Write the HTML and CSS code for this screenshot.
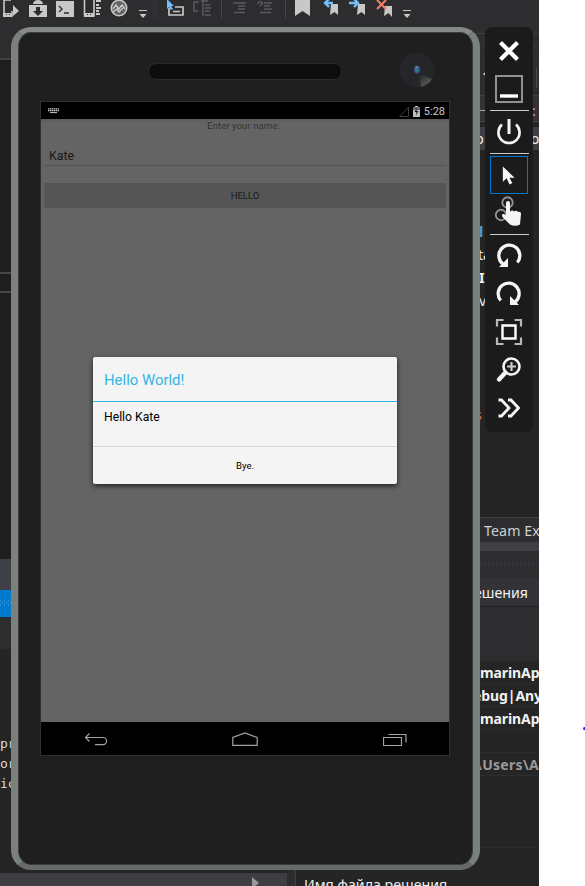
FILE: index.html
```html
<!DOCTYPE html>
<html lang="ru">
<head>
<meta charset="utf-8">
<title>Android Emulator</title>
<link rel="stylesheet" href="styles.css">
</head>
<body>
<div class="desktop">
  <div class="ide">
    <div class="toolbar">
      <svg width="539" height="27" viewBox="0 0 539 27">
        <g fill="none" stroke="#c8c8c8" stroke-width="1.6">
          <path d="M11 0H4V16H12V11"/><path d="M84.500 0V16H94V0"/>
        </g>
        <g fill="#c8c8c8">
          <path d="M13 5l6 6-6 5zM3 13h9v4H3zM84 13h10v4H84z"/>
          <path d="M96 0h5v2h-5zM96 4h3v2h-3zM96 7h5v2h-5zM96 10h3v2h-3zM96 13h4v2h-4z"/>
          <path d="M29 5h18v12H29zM33 4a5 4 0 0 1 10 0z"/>
          <path d="M56 1h18v16H56z"/>
          <path d="M295 0h15v16l-7.500-5-7.500 5z"/>
          <path d="M331 4h7v11l-3.500-3-4.500 3zM358 4h7v11l-3.500-3-4.500 3zM385 6h7v11l-3.500-4-4.500 3z"/>
          <path d="M139 10h8v1h-8zM139.500 14h7l-3.500 4zM403 10h8v1h-8zM403.500 14h7l-3.500 4z"/>
        </g>
        <path d="M36 7h4v4h3l-5 5-5-5h3z" fill="#2d2d30"/>
        <path d="M59 6l3 3-3 3M64 13h5" fill="none" stroke="#2d2d30" stroke-width="1.300"/>
        <path d="M6 14.500h1M9 14.500h1M87 14.500h1M90 14.500h1" stroke="#2d2d30"/>
        <circle cx="119" cy="8" r="7.700" fill="#646466" stroke="#c8c8c8" stroke-width="1.600"/>
        <path d="M113 9l3-4 3 4 3-4 3 4M113 12l4-3 2 3 4-4" fill="none" stroke="#c8c8c8" stroke-width="1.400"/>
        <path d="M153 1v18M157 1v18" stroke="#46464a" stroke-width="1" stroke-dasharray="1 3"/><path d="M155 3v16" stroke="#46464a" stroke-dasharray="1 3"/>
        <path d="M169 8v7h14V7h-8M173 11.500h7" fill="none" stroke="#c8c8c8" stroke-width="1.700"/>
        <path d="M167 0v9l2-2 2 3 2-1-2-3h3l-6-6z" fill="#75bfff"/>
        <g fill="none" stroke="#5b5b5e" stroke-width="1.500">
          <path d="M199 2h-5v9h4M203 0v16M201 1h7M205 5h5M205 8h6M205 11h5M205 15h6"/>
          <path d="M233 3h13M238 6h7M238 9h7M234 12.500h11M258 4q0-3 3-2t-1 4M264 3h8M264 6h6M264 9h8M260 12.500h11"/>
        </g>
        <path d="M221.500 0v18M285.500 0v18" stroke="#46464a"/>
        <path d="M333 3h-8M329-1l-4 4 4 4M349 3h9M354-1l4 4-4 4" fill="none" stroke="#75bfff" stroke-width="2.400"/>
        <path d="M377 0l9 9M386 0l-9 9" stroke="#f6806c" stroke-width="2"/>
      </svg>
    </div>
    <div class="work">
      <div class="editor">
        <div class="editor-tabs"></div>
        <div class="code-pane"><div class="splitter-line"></div><div class="splitter-line second"></div></div>
        <div class="pane-gap"></div>
        <div class="pane-title"><svg width="12" height="8"><path d="M0 1h12M0 5h12" stroke="#59a8de" stroke-dasharray="1 3"/><path d="M2 3h10" stroke="#59a8de" stroke-dasharray="1 3"/></svg></div>
        <div class="pane-tools"></div>
        <div class="output"><div>pr</div><div>or</div><div>ic</div></div>
        <div class="scrollbar"><svg width="9" height="12" viewBox="0 0 9 12"><path d="M0 0l7 6-7 6z" fill="#999"/></svg></div>
      </div>
      <div class="explorer">
        <div class="exp-top"></div>
        <div class="exp-dots"><svg width="60" height="12"><path d="M1 1h58M1 5h58" stroke="#46464a" stroke-dasharray="1 3"/><path d="M3 3h56" stroke="#46464a" stroke-dasharray="1 3"/></svg></div>
        <div class="exp-tools"><svg width="60" height="34"><path d="M6 1.500v5l-3-2.500z" transform="translate(0 2)" fill="#ccc"/><path d="M56.500 -4v24" stroke="#4a4a4f"/></svg></div>
        <div class="exp-search"><span>:</span></div>
        <div class="exp-gap"></div>
        <div class="exp-selected"><span>p</span><span>o</span></div>
        <div class="tree">
          <div class="blue">l</div><div class="ta">ta</div><div class="strong">Ir</div><div>v</div><div class="orange">s</div>
        </div>
        <div class="team">Team Ex</div>
        <div class="exp-divider"></div>
        <div class="prop-dots"><svg width="60" height="8"><path d="M0 1h60M0 5h60" stroke="#46464a" stroke-dasharray="1 3"/><path d="M2 3h58" stroke="#46464a" stroke-dasharray="1 3"/></svg></div>
        <div class="prop-title">ешения</div>
        <div class="prop-tools"></div>
        <div class="props">
          <div class="prop">marinAp</div><div class="prop"><span class="bug">e</span>bug|Any</div><div class="prop">marinAp</div><div class="prop"></div><div class="prop dim"><span class="slash">\</span>Users\A</div><div class="prop tall"></div>
        </div>
        <div class="prop-help"><div class="help-name">(Имя)</div><div>Имя файла решения</div></div>
      </div>
    </div>
  </div>
  <div class="page-edge"><span class="mark"></span></div>

  <div class="phone">
    <div class="phone-top">
      <div class="speaker"></div>
      <svg class="camera" width="36" height="36" viewBox="0 0 36 36"><defs><linearGradient id="glare" x1="0" y1="0" x2="1" y2="1"><stop offset="0" stop-color="#252628"/><stop offset="1" stop-color="#69696a"/></linearGradient></defs><circle cx="18" cy="18" r="17.500" fill="#25262a"/><path d="M20 23l2 12a17.500 17.500 0 0 0 11-8L24 23z" fill="url(#glare)"/><ellipse cx="18" cy="17.500" rx="3" ry="4" fill="#40558a"/><circle cx="18" cy="18.500" r="1.800" fill="#267c87"/><circle cx="17.500" cy="15.500" r="1" fill="#858bb5"/></svg>
    </div>
    <div class="screen">
      <div class="status">
        <svg width="11" height="6" viewBox="0 0 11 6"><path d="M0 .8h11M0 2.700h11" stroke="#c8c8c8" stroke-width="1.300" stroke-dasharray="1.500 .5"/><path d="M2 4.600h7" stroke="#c8c8c8"/></svg>
        <div class="status-right">
          <svg width="10" height="11" viewBox="0 0 10 11"><path d="M.5 10.500h9V1z" fill="none" stroke="#3d3d3d"/></svg>
          <svg width="7" height="11" viewBox="0 0 7 11"><path d="M2 0h3v1h2v10H0V1h2z" fill="#bdbdbd"/><path d="M0 1h7v3H0z" fill="#666"/><path d="M4 2L1.500 6h2L3 9.500 5.500 5h-2z" fill="#111"/></svg>
          <span>5:28</span>
        </div>
      </div>
      <div class="app">
        <div class="label">Enter your name:</div>
        <div class="field">Kate</div>
        <div class="hello">HELLO</div>
        <div class="dialog">
          <div class="dialog-title">Hello World!</div>
          <div class="dialog-body">Hello Kate</div>
          <div class="dialog-button">Bye.</div>
        </div>
      </div>
      <div class="nav">
        <svg width="24" height="16" viewBox="0 0 24 16"><path d="M5.500 1.500L1.500 5.500l4 4M1.500 5.500H19a3.600 3.600 0 0 1 0 7.200H11" fill="none" stroke="#a2a2a2" stroke-width="1.200"/></svg>
        <svg class="home" width="26" height="16" viewBox="0 0 26 16"><path d="M.8 13.300V5.500L13 1l12.200 4.500v7.800z" fill="none" stroke="#a2a2a2" stroke-width="1.200"/></svg>
        <svg width="24" height="16" viewBox="0 0 24 16"><path d="M.5 5.500h18v8H.5zM5.500 2.500h17.500v8" fill="none" stroke="#a2a2a2" stroke-width="1.200"/></svg>
      </div>
    </div>
  </div>

  <div class="controls">
    <svg class="cell close" viewBox="0 0 40 40"><path d="M11.500 11.500l17 17M28.500 11.500l-17 17" stroke="#fff" stroke-width="4.200"/></svg>
    <svg class="cell minimize" viewBox="0 0 40 40"><path d="M7 7h26v26H7z" fill="none" stroke="#929292" stroke-width="2"/><path d="M11 27h18" stroke="#fff" stroke-width="3.400"/></svg>
    <svg class="cell power" viewBox="0 0 40 40"><path d="M20 7v15" stroke="#f5f5f5" stroke-width="3"/><path d="M13 12.500a10.600 10.600 0 1 0 14 0" fill="none" stroke="#f5f5f5" stroke-width="2.600"/></svg>
    <svg class="cell pointer" viewBox="0 0 38 38"><path d="M12.500 10v16l4-3.500 3 6.500 3-1.500-3-5.500h5.500z" fill="#f5f5f5"/></svg>
    <svg class="cell touch" viewBox="0 0 40 40"><circle cx="18.500" cy="10.500" r="5.200" fill="none" stroke="#929292" stroke-width="1.900"/><circle cx="12" cy="23" r="5.200" fill="none" stroke="#929292" stroke-width="1.900"/><path d="M17 11q0-2 2-2t2 2v8.500q2.500-2 4 0 2.500-1.500 4 .5 3-1 3 2l-1 10.500q-5 2.500-10 0l-7-7q-2-2.500 0-3.500 1.500-.5 3 1.500z" fill="#f5f5f5"/></svg>
    <svg class="cell rotate" viewBox="0 0 40 40"><path d="M28.300 26.500A10.500 10.500 0 1 0 14 28" fill="none" stroke="#f5f5f5" stroke-width="3.300"/><path d="M10 31h9v-9z" fill="#f5f5f5"/></svg>
    <svg class="cell rotate-right" viewBox="0 0 40 40"><path d="M11.700 26.500A10.500 10.500 0 1 1 26 28" fill="none" stroke="#f5f5f5" stroke-width="3.300"/><path d="M30 31h-9v-9z" fill="#f5f5f5"/></svg>
    <svg class="cell fit" viewBox="0 0 40 40"><path d="M13.500 13.500h13v13h-13z" fill="none" stroke="#fff" stroke-width="2.400"/><path d="M8 14.500V8h6.500M25.500 8H32v6.500M32 25.500V32h-6.500M14.500 32H8v-6.500" fill="none" stroke="#b8b8b8" stroke-width="2.200"/></svg>
    <svg class="cell magnify" viewBox="0 0 40 40"><circle cx="22.500" cy="17.500" r="8" fill="none" stroke="#f5f5f5" stroke-width="2.600"/><path d="M22.500 13v9M18 17.500h9" stroke="#ccc" stroke-width="2.200"/><path d="M16.500 23.500l-6.500 7" stroke="#f5f5f5" stroke-width="4.400" stroke-linecap="round"/></svg>
    <svg class="cell more" viewBox="0 0 40 40"><path d="M9.500 12h3l7.500 8-7.500 8h-3M19 12h3l7.500 8-7.500 8h-3" fill="none" stroke="#f5f5f5" stroke-width="2.800"/></svg>
  </div>
</div>
</body>
</html>
```
FILE: styles.css
```css
* { box-sizing: border-box; }
body { margin: 0; background: #fff; }
svg { display: block; flex: none; }
.desktop { position: relative; display: flex; width: 585px; height: 886px; overflow: hidden; }
.ide { width: 539px; height: 886px; display: flex; flex-direction: column; overflow: hidden; background: #2d2d30; }
.toolbar { height: 27px; flex: none; }
.work { display: flex; height: 859px; }
.page-edge { flex: 1; padding: 727px 0 0 44px; }
.mark { display: block; width: 2px; height: 3px; background: #2a20ff; border-radius: 2px 0 0 2px; }

.editor { width: 287px; flex: none; }
.editor-tabs { height: 33px; border-bottom: 2px solid #3f3f46; }
.code-pane { height: 499px; background: #1e1e1e; padding-top: 212px; }
.splitter-line { height: 2px; background: #46464a; margin-bottom: 17px; }
.pane-gap { height: 31px; background: #3f3f46; }
.pane-title { height: 27px; background: #007acc; padding-top: 10px; }
.pane-tools { height: 32px; background: #2d2d30; }
.output { height: 224px; padding-top: 85px; background: #252526; color: #dcdcdc; font: 13px/20px "DejaVu Sans Mono", monospace; }
.scrollbar { height: 13px; background: #3e3e42; padding: 4px 0 0 252px; }

.explorer { width: 244px; margin-left: 8px; flex: none; border-left: 1px solid #3f3f46; color: #f1f1f1; font: 14.200px/23px "Noto Sans", sans-serif; white-space: nowrap; }
.exp-top { height: 7px; border-bottom: 1px solid #3f3f46; }
.exp-dots { height: 27px; padding: 10px 0 0 184px; }
.exp-tools { height: 35px; padding: 7px 0 0 184px; border-bottom: 1px solid #3f3f46; }
.exp-tools svg { height: 24px; }
.exp-search { height: 26px; margin-left: 184px; padding-left: 52px; border-bottom: 1px solid #46464a; color: #d69d85; line-height: 30px; background: linear-gradient(#aaa, #aaa) 0 14px / 6px 1px no-repeat #333337; }
.exp-gap { height: 5px; background: #252526; }
.exp-selected { height: 23px; background: #3f3f46; display: flex; padding-left: 179px; gap: 47px; }
.tree { height: 368px; background: #252526; border-bottom: 1px solid #3f3f46; padding: 70px 0 0 183px; }
.blue { color: #569cd6; font-weight: bold; }
.ta { margin-left: -1px; }
.strong { font-weight: bold; }
.orange { color: #ce7b45; margin-top: 91px; margin-left: -4px; }
.team { height: 24px; padding: 1px 0 0 188px; color: #d0d0d0; letter-spacing: 0.100px; }
.exp-divider { height: 9px; background: #3f3f46; }
.prop-dots { height: 27px; padding: 10px 0 0 184px; }
.prop-title { height: 29px; padding: 3px 0 0 178px; background: #333337; border-bottom: 1px solid #222; }
.prop-tools { height: 54px; }
.props { background: #252526; font-weight: bold; font-size: 14px; letter-spacing: -0.100px; }
.prop { height: 23px; border-bottom: 1px solid #2d2d30; padding-left: 184px; }
.bug { margin-left: -7px; }
.slash { margin-left: -4px; }
.dim { color: #999; letter-spacing: 0.300px; }
.tall { height: 72px; }
.prop-help { height: 39px; background: #252526; padding-left: 8px; line-height: 22px; }
.help-name { font-weight: bold; height: 22px; margin-bottom: 4px; }

.phone { position: absolute; left: 11px; top: 27px; width: 469px; height: 843px; background: #1f1f1f; border: solid #7c817d; border-width: 5px 7px; border-color: #858a86 #7a807b #666b68; border-radius: 20px; box-shadow: inset 0 0 0 1px #393c3a; padding: 0 22px; }
.phone-top { height: 69px; padding: 20px 16px 0 108px; display: flex; justify-content: space-between; align-items: center; }
.speaker { width: 194px; height: 17px; margin-top: -10px; border-radius: 8px; background: #0d0d0d; border: 1px solid #292929; }
.camera { margin-top: -14px; }
.screen { width: 410px; height: 655px; border: 1px solid #303030; display: flex; flex-direction: column; font-family: Roboto, sans-serif; }
.status { height: 17px; flex: none; background: #000; display: flex; align-items: center; justify-content: space-between; padding: 1px 4px 0 7px; color: #c8c8c8; font-size: 11px; }
.status-right { display: flex; align-items: center; gap: 4px; }
.app { position: relative; flex: 1; background: linear-gradient(#5a5a5a, #646464 3px); color: #181818; }
.label { text-align: center; height: 14px; font-size: 9.700px; line-height: 14px; color: #343434; padding-right: 3px; }
.field { height: 33px; margin: 0 3px; padding: 14px 5px 0; font-size: 12.400px; line-height: 18px; border-bottom: 1px solid #545454; }
.hello { height: 25px; margin: 17px 3px 0; background: #555; text-align: center; font-size: 9.500px; line-height: 25px; }
.nav { height: 33px; flex: none; background: #000; display: flex; align-items: center; justify-content: space-between; padding: 2px 42px 0 43px; }
.home { margin-left: -2px; }
.dialog { position: absolute; left: 52px; top: 238px; width: 304px; height: 127px; border-radius: 2px; background: #f4f4f4; box-shadow: 0 2px 5px #222; color: #000; overflow: visible; }
.dialog-title { height: 45px; padding-left: 11px; border-bottom: 1px solid #33b5e5; color: #33b5e5; font-size: 14.900px; line-height: 46px; }
.dialog-body { height: 45px; padding: 6px 11px; border-bottom: 1px solid #d5d5d5; font-size: 12.200px; line-height: 18px; }
.dialog-button { height: 37px; line-height: 38px; text-align: center; font-size: 9.500px; }

.controls { position: absolute; left: 485px; top: 27px; width: 48px; height: 405px; background: linear-gradient(#ccc, #ccc) 5px 83px / 39px 1px no-repeat, linear-gradient(#ccc, #ccc) 5px 126px / 39px 1px no-repeat, linear-gradient(#ccc, #ccc) 5px 207px / 39px 1px no-repeat, #1b1b1b; border-radius: 7px; display: flex; flex-direction: column; align-items: center; padding-top: 4px; }
.cell { width: 40px; height: 40px; flex: none; }
.minimize { margin-top: -2px; }
.power { margin-top: 3px; }
.pointer { width: 38px; height: 38px; border: 1px solid #0078d0; margin: 4px 1px 0 0; }
.touch { margin-top: -2px; }
.rotate { margin-top: 4px; }
.rotate-right, .fit { margin-top: -2px; }
.magnify { margin-top: -3px; }
.more { margin-top: -1px; }
```
